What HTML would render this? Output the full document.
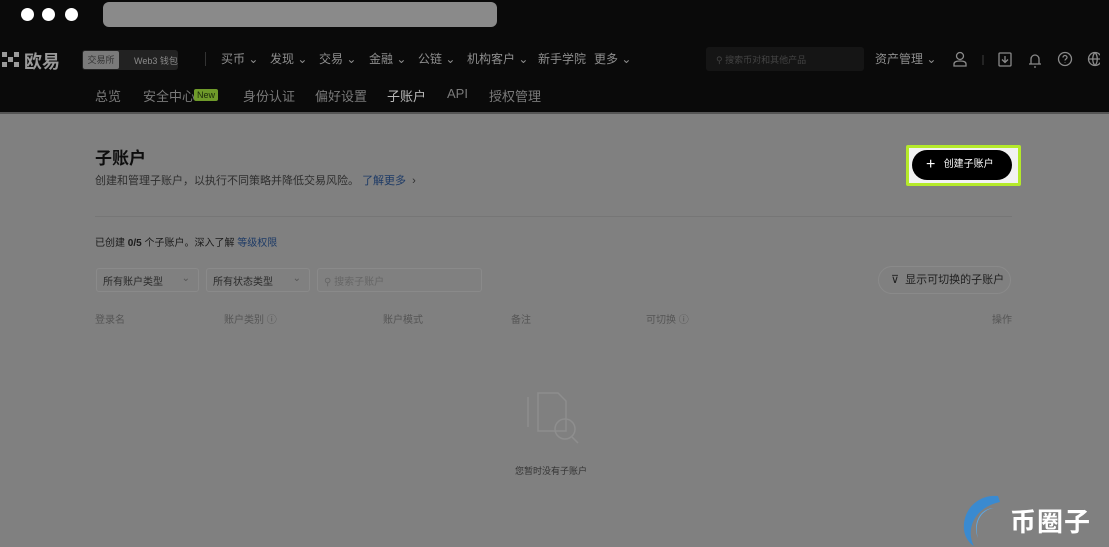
<!DOCTYPE html>
<html><head><meta charset="utf-8"><style>
*{margin:0;padding:0;box-sizing:border-box}
body{width:1109px;height:547px;overflow:hidden;background:#808080;font-family:"Liberation Sans","Noto Sans CJK SC",sans-serif;position:relative}
.a{position:absolute;white-space:nowrap}
.top{position:absolute;left:0;top:0;width:1109px;height:113px;background:#0a0a0a}
.dot{position:absolute;width:13px;height:13px;border-radius:50%;background:#fff;top:8px}
.nav{color:#8e8e8e;font-size:12px;top:50px}
.sub{color:#7a7a7a;font-size:13px;top:86px}
.g{color:#3a3a3a;font-size:10px}
.sel{position:absolute;top:268px;height:24px;border:1px solid #8a8a8a;border-radius:3px;font-size:10px;color:#2a2a2a;padding:4px 6px}
</style></head><body>
<div class="top"></div>
<div class="dot" style="left:21px"></div><div class="dot" style="left:42px"></div><div class="dot" style="left:65px"></div>
<div class="a" style="left:103px;top:2px;width:394px;height:25px;background:#8a8a8a;border-radius:6px"></div>
<div class="a" style="left:0;top:112px;width:1109px;height:2px;background:#555"></div>
<svg class="a" style="left:2px;top:52px" width="18" height="16" viewBox="0 0 18 16"><g fill="#9a9a9a"><rect x="0" y="0" width="5" height="5"/><rect x="12" y="0" width="5" height="5"/><rect x="6" y="5" width="5" height="5"/><rect x="0" y="10" width="5" height="5"/><rect x="12" y="10" width="5" height="5"/></g></svg>
<div class="a" style="left:24px;top:48px;font-size:18px;font-weight:bold;color:#9a9a9a">欧易</div>
<div class="a" style="left:82px;top:50px;width:96px;height:20px;background:#222;border-radius:3px"></div>
<div class="a" style="left:83px;top:51px;width:36px;height:18px;background:#7a7a7a;border-radius:2px;font-size:9px;color:#333;text-align:center;line-height:18px">交易所</div>
<div class="a" style="left:134px;top:54px;font-size:9px;color:#8a8a8a">Web3 钱包</div>
<div class="a" style="left:205px;top:52px;width:1px;height:14px;background:#333"></div>
<div class="a nav" style="left:221px">买币 ⌄</div>
<div class="a nav" style="left:270px">发现 ⌄</div>
<div class="a nav" style="left:319px">交易 ⌄</div>
<div class="a nav" style="left:369px">金融 ⌄</div>
<div class="a nav" style="left:418px">公链 ⌄</div>
<div class="a nav" style="left:467px">机构客户 ⌄</div>
<div class="a nav" style="left:538px">新手学院</div>
<div class="a nav" style="left:594px">更多 ⌄</div>
<div class="a" style="left:706px;top:47px;width:158px;height:24px;background:#151515;border-radius:3px"></div>
<div class="a" style="left:716px;top:53px;font-size:9px;color:#444">⚲ 搜索币对和其他产品</div>
<div class="a nav" style="left:875px">资产管理 ⌄</div>
<svg class="a" style="left:950px;top:50px" width="150" height="20" fill="none" stroke="#8a8a8a" stroke-width="1.3">
<circle cx="10" cy="6" r="3.5"/><path d="M4 16v-2q0-3 6-3 6 0 6 3v2z"/>
<path d="M33 5v10" stroke="#333"/>
<rect x="49" y="3" width="12" height="13" rx="1"/><path d="M55 6v6M52 9.5l3 3 3-3"/>
<path d="M79 14h12M81 14v-5a4 4 0 018 0v5M84 17h2"/>
<circle cx="115" cy="9" r="6.5"/><path d="M113 7.5a2 2 0 114 0c0 1.5-2 1.5-2 3M115 12.5v.5"/>
<circle cx="145" cy="9" r="6.5"/><path d="M138.5 9h13M145 2.5c-3 3-3 10 0 13M145 2.5c3 3 3 10 0 13"/>
</svg>
<div class="a sub" style="left:95px">总览</div>
<div class="a sub" style="left:143px">安全中心</div>
<div class="a" style="left:194px;top:89px;background:#6f9a2a;color:#1a2a0a;font-size:9px;padding:1px 3px;border-radius:2px">New</div>
<div class="a sub" style="left:243px">身份认证</div>
<div class="a sub" style="left:315px">偏好设置</div>
<div class="a sub" style="left:387px;color:#b8b8b8">子账户</div>
<div class="a sub" style="left:447px">API</div>
<div class="a sub" style="left:489px">授权管理</div>
<div class="a" style="left:95px;top:144px;font-size:17px;font-weight:bold;color:#0e0e0e">子账户</div>
<div class="a" style="left:95px;top:172px;font-size:11px;color:#2e2e2e">创建和管理子账户，以执行不同策略并降低交易风险。 <span style="color:#1d3a66">了解更多</span> &nbsp;›</div>
<div class="a" style="left:906px;top:145px;width:115px;height:41px;background:#b5ea2a;border-radius:2px"></div>
<div class="a" style="left:909px;top:148px;width:109px;height:35px;background:#f2f2f2"></div>
<div class="a" style="left:912px;top:150px;width:100px;height:30px;background:#000;border-radius:15px;color:#fff;font-size:10px;line-height:30px;padding-left:14px"><span style="font-size:16px;vertical-align:-2px">+</span>&nbsp;&nbsp;&nbsp;创建子账户</div>
<div class="a" style="left:95px;top:216px;width:917px;height:1px;background:#767676"></div>
<div class="a g" style="left:95px;top:234px;color:#1a1a1a">已创建 <b>0/5</b> 个子账户。深入了解 <span style="color:#1d3a66">等级权限</span></div>
<div class="sel" style="left:96px;width:103px">所有账户类型<span style="position:absolute;right:8px;color:#555">⌄</span></div>
<div class="sel" style="left:206px;width:104px">所有状态类型<span style="position:absolute;right:8px;color:#555">⌄</span></div>
<div class="sel" style="left:317px;width:165px;color:#666">⚲ 搜索子账户</div>
<div class="a" style="left:878px;top:266px;width:133px;height:28px;border:1px solid #8a8a8a;border-radius:14px;font-size:11px;color:#1e1e1e;line-height:26px;padding-left:12px">⊽&nbsp;&nbsp;显示可切换的子账户</div>
<div class="a g" style="left:95px;top:311px;color:#555">登录名</div>
<div class="a g" style="left:224px;top:311px;color:#555">账户类别 ⓘ</div>
<div class="a g" style="left:383px;top:311px;color:#555">账户模式</div>
<div class="a g" style="left:511px;top:311px;color:#555">备注</div>
<div class="a g" style="left:646px;top:311px;color:#555">可切换 ⓘ</div>
<div class="a g" style="left:992px;top:311px;color:#555">操作</div>
<svg class="a" style="left:520px;top:385px" width="70" height="65" fill="none" stroke="#8e8e8e" stroke-width="1.5"><path d="M8 12v30M18 8h20l8 8v30H18z"/><circle cx="45" cy="44" r="10"/><path d="M52 52l6 6"/></svg>
<div class="a g" style="left:515px;top:464px;color:#333;font-size:9px">您暂时没有子账户</div>
<svg class="a" style="left:958px;top:488px" width="52" height="58"><path d="M40 8C20 6 4 22 6 42c1 8 6 14 10 16C8 44 14 20 42 14z" fill="#3a8ad0"/><path d="M36 20C22 22 16 36 20 50c-6-14 2-30 16-30z" fill="#5aa8e8"/></svg>
<div class="a" style="left:1010px;top:502px;font-size:26px;font-weight:bold;color:#fff;letter-spacing:1px">币圈子</div>
</body></html>
